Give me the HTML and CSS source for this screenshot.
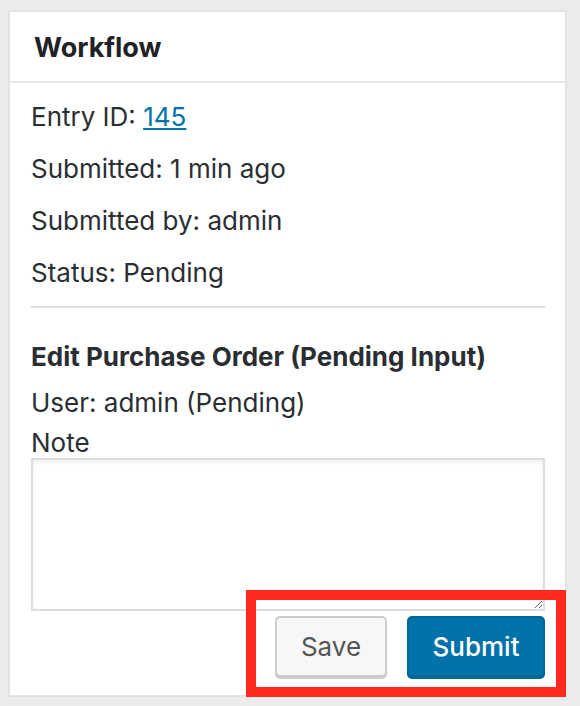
FILE: index.html
```html
<!DOCTYPE html>
<html lang="en">

<head>
  <meta charset="UTF-8">
  <meta name="viewport" content="width=device-width, initial-scale=1.0">
  <title>Workflow</title>
  <link rel="stylesheet" href="styles.css">
</head>

<body>
  <div class="postbox">
    <h2 class="postbox-title">Workflow</h2>
    <div class="inside">
      <p class="meta">Entry ID: <a href="#" class="entry-link">145</a></p>
      <p class="meta">Submitted: 1 min ago</p>
      <p class="meta">Submitted by: admin</p>
      <p class="meta">Status: Pending</p>
      <hr class="divider">
      <h4 class="step-title">Edit Purchase Order (Pending Input)</h4>
      <div class="step-user">User: admin (Pending)</div>
      <label for="note" class="note-label">Note</label>
      <textarea id="note" class="note"></textarea>
      <div class="actions">
        <button type="button" class="button">Save</button>
        <button type="button" class="button button-primary">Submit</button>
      </div>
    </div>
    <!-- annotation box -->
    <div class="highlight"></div>
  </div>
</body>

</html>
```

FILE: styles.css
```css
body {
  margin: 0;
  padding: 10px 0 0 8px;
  background: #ececec;
  font-family: 'Inter', 'Liberation Sans', sans-serif;
  font-size: 26px;
  color: #2a2e33;
}

.postbox {
  position: relative;
  width: 559px;
  box-sizing: border-box;
  background: #fff;
  border: 2px solid #e3e3e3;
}

.postbox-title {
  margin: 0;
  height: 69px;
  padding-left: 24px;
  font-size: 27px;
  font-weight: 700;
  line-height: 72px;
  color: #1e2226;
  border-bottom: 2px solid #e8e8e8;
}

.inside {
  padding: 8px 20px 18px 21px;
}

.meta {
  margin: 0;
  line-height: 52px;
}

.entry-link {
  color: #0073aa;
  text-decoration: underline;
}

.divider {
  margin: 7px 0 0;
  border: 0;
  border-top: 2px solid #dddddd;
}

.step-title {
  margin: 26px 0 0;
  font-size: 26px;
  font-weight: 700;
  line-height: 46px;
}

.step-user {
  line-height: 46px;
}

.note-label {
  display: block;
  margin-top: 2px;
  line-height: 30px;
}

.note {
  display: block;
  width: 100%;
  height: 153px;
  box-sizing: border-box;
  margin: 0;
  border: 2px solid #dddddd;
  box-shadow: inset 0 2px 4px rgba(0, 0, 0, 0.07);
  font: inherit;
}

.actions {
  display: flex;
  justify-content: flex-end;
  gap: 20px;
  margin-top: 5px;
}

.button {
  width: 112px;
  height: 61px;
  padding: 0;
  box-sizing: border-box;
  background: #f7f7f7;
  border: 2px solid #cccccc;
  border-radius: 5px;
  box-shadow: 0 2px 0 #cccccc;
  font-family: inherit;
  font-size: 26px;
  color: #555555;
  cursor: pointer;
}

.button-primary {
  width: 138px;
  background: #0073aa;
  border-color: #006799;
  box-shadow: 0 2px 0 #006799;
  color: #fff;
  font-weight: 500;
  text-shadow: 0 -1px 1px #006799;
}

.highlight {
  position: absolute;
  left: 236px;
  top: 578px;
  width: 320px;
  height: 107px;
  box-sizing: border-box;
  border: 10px solid #ff2a1d;
}
```
